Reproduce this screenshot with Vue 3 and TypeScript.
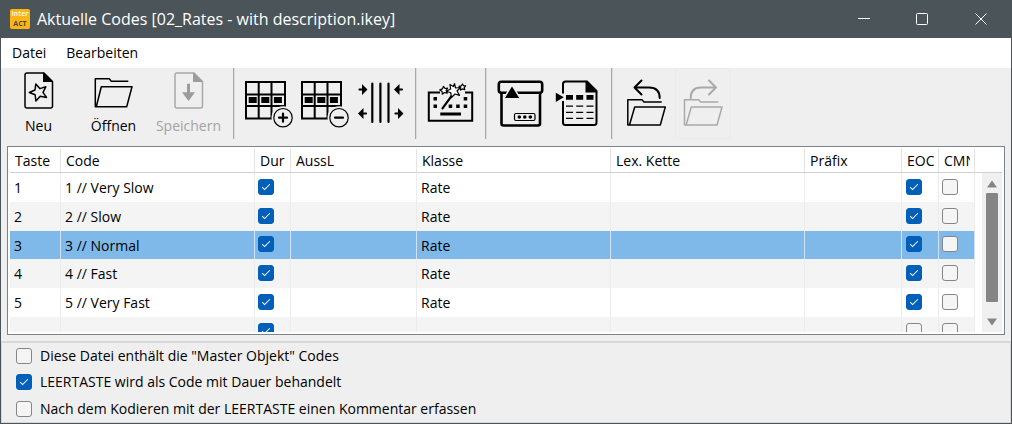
<script setup lang="ts">
import { ref } from 'vue'

interface CodeRow {
  key: string
  code: string
  duration: boolean
  statement: string
  klass: string
  chain: string
  prefix: string
  eoc: boolean
  comment: boolean
}

const makeRow = (key: string, code: string, klass: string, eoc: boolean): CodeRow => ({
  key,
  code,
  duration: true,
  statement: '',
  klass,
  chain: '',
  prefix: '',
  eoc,
  comment: false,
})

const rows = ref<CodeRow[]>([
  makeRow('1', '1 // Very Slow', 'Rate', true),
  makeRow('2', '2 // Slow', 'Rate', true),
  makeRow('3', '3 // Normal', 'Rate', true),
  makeRow('4', '4 // Fast', 'Rate', true),
  makeRow('5', '5 // Very Fast', 'Rate', true),
  makeRow('', '', '', false),
])

const selected = ref(2)

const columns = [
  { id: 'key', label: 'Taste' },
  { id: 'code', label: 'Code' },
  { id: 'dur', label: 'Dur' },
  { id: 'stmt', label: 'AussL' },
  { id: 'klass', label: 'Klasse' },
  { id: 'chain', label: 'Lex. Kette' },
  { id: 'prefix', label: 'Präfix' },
  { id: 'eoc', label: 'EOC' },
  { id: 'cmnt', label: 'CMN' },
]

const options = ref([
  { id: 'master', label: 'Diese Datei enthält die "Master Objekt" Codes', checked: false },
  { id: 'space', label: 'LEERTASTE wird als Code mit Dauer behandelt', checked: true },
  { id: 'note', label: 'Nach dem Kodieren mit der LEERTASTE einen Kommentar erfassen', checked: false },
])
</script>

<template>
  <div class="window">
    <header class="titlebar">
      <div class="logo" aria-hidden="true"><span class="logo-top">inter</span><span class="logo-bottom">ACT</span></div>
      <h1 class="title">Aktuelle Codes [02_Rates - with description.ikey]</h1>
      <button class="caption" type="button" aria-label="Minimieren">
        <svg width="14" height="14" viewBox="0 0 14 14"><path d="M1 6.5h12" /></svg>
      </button>
      <button class="caption" type="button" aria-label="Maximieren">
        <svg width="14" height="14" viewBox="0 0 14 14"><rect x="1.5" y="1.5" width="11" height="11" rx="1" /></svg>
      </button>
      <button class="caption" type="button" aria-label="Schließen">
        <svg width="14" height="14" viewBox="0 0 14 14"><path d="M1.5 1.5l11 11M12.500 1.500l-11 11" /></svg>
      </button>
    </header>

    <nav class="menubar">
      <button type="button">Datei</button>
      <button type="button">Bearbeiten</button>
    </nav>

    <div class="toolbar">
      <div class="group labelled">
        <button type="button" class="file-button">
          <svg width="75" height="44" viewBox="0 0 75 44">
            <path class="line" d="M43 5H26q-2 0-2 2v31q0 2 2 2h23.500q2 0 2-2V13.500z" />
            <path class="solid" d="M42 4.300l10 9.700H42z" />
            <path class="line" d="M28.300 24.500L34 22l.8-6 4 4.600 6-1.800-2.800 5.500 3.500 5.200-6.300-1.200-4.300 4.700-.8-6.200z" />
          </svg>
          <span>Neu</span>
        </button>
        <button type="button" class="file-button">
          <svg width="75" height="44" viewBox="0 0 75 44">
            <path class="line" d="M52.300 13.200H35.300l-2-2.500H19.300v28h31.400l5.300-20H25.300l-5 20" />
          </svg>
          <span>Öffnen</span>
        </button>
        <button type="button" class="file-button" disabled>
          <svg width="75" height="44" viewBox="0 0 75 44">
            <path class="line" d="M43 5H26q-2 0-2 2v31q0 2 2 2h23.500q2 0 2-2V13.500z" />
            <path class="solid" d="M42 4.300l10 9.700H42z" />
            <path class="solid" d="M36 15.700h3v8.600h5l-6.500 8.700L31 24.300h5z" />
          </svg>
          <span>Speichern</span>
        </button>
      </div>

      <div class="divider"></div>

      <div class="group">
        <button type="button" class="tool" aria-label="Zeile hinzufügen">
          <svg width="56" height="70" viewBox="0 0 56 70">
            <path class="grid-lines" d="M5 14h39v36.500H5zM5 26.500h39M5 38h39M17.700 14v36.500M30.500 14v36.500" />
            <path class="solid" d="M7.700 29h8v6h-8zM20.300 29h8v6h-8zM32.900 29h8v6h-8z" />
            <circle class="halo" cx="42" cy="49.700" r="11.500" />
            <circle class="ring" cx="42" cy="49.700" r="9.200" />
            <path class="bold" d="M38 49.700h8M42 45.700v8" />
          </svg>
        </button>
        <button type="button" class="tool" aria-label="Zeile entfernen">
          <svg width="56" height="70" viewBox="0 0 56 70">
            <path class="grid-lines" d="M5 14h39v36.500H5zM5 26.500h39M5 38h39M17.700 14v36.500M30.500 14v36.500" />
            <path class="solid" d="M7.700 29h8v6h-8zM20.300 29h8v6h-8zM32.900 29h8v6h-8z" />
            <circle class="halo" cx="42" cy="49.700" r="11.500" />
            <circle class="ring" cx="42" cy="49.700" r="9.200" />
            <path class="bold" d="M38 49.700h8" />
          </svg>
        </button>
        <button type="button" class="tool" aria-label="Spaltenbreite anpassen">
          <svg width="56" height="70" viewBox="0 0 56 70">
            <path class="bars" d="M19.300 15.500v38.500M27.400 15.500v38.500M35.500 15.500v38.500" />
            <path class="bold" d="M6.500 21.500h5M49 21.500h-5M13 45.500H9M42.500 45.500h4" />
            <path class="solid" d="M9 16l5.500 5.500L9 27zM46.500 16L41 21.500l5.500 5.500zM10.500 40L5 45.500l5.500 5.500zM45 40l5.500 5.500L45 51z" />
          </svg>
        </button>
      </div>

      <div class="divider"></div>

      <div class="group">
        <button type="button" class="tool" aria-label="Tasten automatisch zuweisen">
          <svg width="56" height="70" viewBox="0 0 56 70">
            <path class="grid-lines" d="M17 24.500H5.800V52.700h43.400V24.500H42" />
            <path class="solid" d="M10.500 29H14v3.500h-3.500zM40.700 29h3.500v3.500h-3.500zM10.500 36.500H14V40h-3.500zM25.700 36.500h3.500V40h-3.500zM33.200 36.500h3.500V40h-3.500zM40.700 36.500h3.500V40h-3.500zM17.300 44.500H38v3H17.300z" />
            <path class="wand" d="M19.500 40.300l9.500-13" />
            <path class="star" d="M31.500 15.500l1 4.500 5-.5-3.500 3.500 2.500 4.300-4.500-1.300-3.500 3.500-.7-4.700-4.600-1.600 4.500-2.200-.8-4.500 3.600 2z" />
            <path class="star" d="M20.500 18.300l1.500 2.200 2.600-.4-1.500 2.400 1.200 2.600-2.800-.6-2.200 1.700-.2-2.800-2.300-1.500 2.600-1z" />
            <path class="star" d="M39.500 16l1 1.700 2.200.2-1.500 1.600.5 2.200-2.200-.8-1.900 1.200.1-2.300-1.700-1.400 2.300-.6z" />
          </svg>
        </button>
      </div>

      <div class="divider"></div>

      <div class="group">
        <button type="button" class="tool" aria-label="Archiv">
          <svg width="56" height="70" viewBox="0 0 56 70">
            <rect class="heavy" x="8.500" y="22" width="38.500" height="35.500" rx="2" />
            <rect class="heavy lid" x="5.800" y="13.800" width="43.400" height="11" rx="2.500" />
            <path class="halo" d="M19 15.500l9.500 15.500h-19z" />
            <path class="solid" d="M19 18.500l7.200 11.500H12z" />
            <rect class="thin" x="21.500" y="45.500" width="20.500" height="7" rx="1.500" />
            <circle class="solid" cx="26.300" cy="49" r="1.800" />
            <circle class="solid" cx="31.800" cy="49" r="1.800" />
            <circle class="solid" cx="37.300" cy="49" r="1.800" />
          </svg>
        </button>
        <button type="button" class="tool" aria-label="Tabelle als Dokument">
          <svg width="56" height="70" viewBox="0 0 56 70">
            <path class="grid-lines" d="M14 25.500V16q0-2.500 2.500-2.500H38L47.500 23v31.500q0 2.500-2.500 2.500H16.500Q14 57 14 54.500V33" />
            <path class="solid" d="M36.500 12.500L48.500 24.500h-12zM6.800 24.700l8 4.600-8 4.700zM17 27h7v4.800h-7zM27.200 27h7v4.800h-7zM37.500 27h7v4.800h-7z" />
            <path class="thin" d="M17 38.200h7M27.200 38.200h7M37.500 38.200h7M17 44.300h7M27.200 44.300h7M37.500 44.300h7M17 50.300h7M27.200 50.300h7M37.500 50.300h7" />
          </svg>
        </button>
      </div>

      <div class="divider"></div>

      <div class="group">
        <button type="button" class="tool" aria-label="Rückgängig">
          <svg width="56" height="70" viewBox="0 0 56 70">
            <path class="line" d="M42.700 34H25l-2-2.300H8.800V57h32.500l5-18H15.700l-5.200 18" />
            <path class="arrow" d="M40.700 30Q40.700 19.500 30 19.500H15.500M22.500 12.500l-7 7 7 7" />
          </svg>
        </button>
        <button type="button" class="tool framed" disabled aria-label="Wiederherstellen">
          <svg width="56" height="70" viewBox="0 0 56 70">
            <path class="line" d="M43.300 34H25.700l-2-2.300H9.500V57H42l5-18H16.300l-5.200 18" />
            <path class="arrow" d="M15.700 30Q15.700 19.500 26 19.500h15M34 12.500l7 7-7 7" />
          </svg>
        </button>
      </div>
    </div>

    <main class="table-frame">
      <div class="table-area">
        <table>
          <colgroup>
            <col v-for="c in columns" :key="c.id" :class="'col-' + c.id" />
          </colgroup>
          <thead>
            <tr>
              <th v-for="c in columns" :key="c.id" scope="col"><span>{{ c.label }}</span></th>
            </tr>
          </thead>
          <tbody>
            <tr v-for="(row, i) in rows" :key="i" :class="{ selected: i === selected }" @click="selected = i">
              <td>{{ row.key }}</td>
              <td>{{ row.code }}</td>
              <td class="tick"><input v-model="row.duration" type="checkbox" aria-label="Dur" /></td>
              <td>{{ row.statement }}</td>
              <td>{{ row.klass }}</td>
              <td>{{ row.chain }}</td>
              <td>{{ row.prefix }}</td>
              <td class="tick tick-eoc"><input v-model="row.eoc" type="checkbox" aria-label="EOC" /></td>
              <td class="tick"><input v-model="row.comment" type="checkbox" aria-label="CMN" /></td>
            </tr>
          </tbody>
        </table>
      </div>
      <div class="side">
        <div class="side-head"></div>
        <div class="scrollbar" aria-hidden="true">
          <svg width="12" height="8" viewBox="0 0 12 8"><path d="M6 .5L11 7.500H1z" /></svg>
          <div class="thumb"></div>
          <svg width="12" height="8" viewBox="0 0 12 8"><path d="M6 7.500L11 .5H1z" /></svg>
        </div>
      </div>
    </main>

    <section class="options">
      <div v-for="o in options" :key="o.id" class="option">
        <input :id="'opt-' + o.id" v-model="o.checked" type="checkbox" />
        <label :for="'opt-' + o.id">{{ o.label }}</label>
      </div>
    </section>
  </div>
</template>

<style>
body {
  margin: 0;
}
</style>

<style scoped>
.window {
  box-sizing: border-box;
  display: flex;
  flex-direction: column;
  height: 100vh;
  border: 1px solid #4b5459;
  border-top: 0;
  background: #efefef;
  color: #000;
  font-family: "Open Sans", "Noto Sans", sans-serif;
  font-size: 14px;
  line-height: 20px;
  overflow: hidden;
}

button {
  padding: 0;
  border: 0;
  background: none;
  color: inherit;
  font: inherit;
}

.titlebar {
  display: flex;
  align-items: center;
  flex: none;
  height: 38px;
  padding-left: 9px;
  background: #4b5459;
  color: #fff;
}

.logo {
  display: flex;
  flex-direction: column;
  justify-content: center;
  width: 20px;
  height: 20px;
  border-radius: 2px;
  background: #fdb515;
  font-size: 7px;
  font-weight: 700;
  line-height: 10px;
  text-align: center;
}

.logo-top {
  color: #fff3d6;
}

.logo-bottom {
  color: #4b4a35;
}

.title {
  flex: 1;
  margin: 0 0 0 7px;
  font-size: 16px;
  font-weight: 400;
  white-space: nowrap;
}

.caption {
  display: flex;
  align-items: center;
  justify-content: center;
  width: 58px;
  height: 38px;
}

.caption:last-child {
  width: 60px;
}

.caption svg {
  fill: none;
  stroke: #fff;
  stroke-width: 1;
}

.menubar {
  display: flex;
  flex: none;
  gap: 20px;
  height: 30px;
  padding-left: 11px;
  background: #fff;
}

.toolbar {
  display: flex;
  flex: none;
  height: 71px;
}

.group {
  display: flex;
}

.labelled {
  padding-right: 1px;
}

.divider {
  box-sizing: border-box;
  width: 2px;
  margin: 0 6px;
  border-left: 1px solid #a8a8a8;
  background: #dcdcdc;
}

.file-button {
  display: flex;
  flex-direction: column;
  align-items: center;
  gap: 4px;
  width: 75px;
}

.tool {
  display: flex;
  width: 56px;
}

.framed {
  border-radius: 4px;
  box-shadow: inset 0 0 0 1px #ebebeb;
}

.toolbar svg {
  display: block;
  fill: none;
  stroke: #000;
  stroke-width: 1.5;
  stroke-linejoin: round;
}

.file-button:disabled {
  color: #a3a3a3;
}

.toolbar button:disabled svg {
  stroke: #a9a9a9;
}

.toolbar svg .solid {
  fill: #000;
  stroke: none;
}

.toolbar button:disabled .solid {
  fill: #9c9c9c;
}

.toolbar .grid-lines {
  stroke-width: 2;
  stroke-linejoin: miter;
}

.toolbar .halo {
  fill: #efefef;
  stroke: none;
}

.toolbar .ring {
  stroke-width: 1.2;
}

.toolbar .bold,
.toolbar .bars,
.toolbar .wand {
  stroke-width: 2.2;
  stroke-linecap: round;
}

.toolbar .star {
  fill: #fff;
  stroke-width: 1.2;
}

.toolbar .heavy {
  stroke-width: 2.6;
}

.toolbar .lid {
  fill: #efefef;
}

.toolbar .thin {
  stroke-width: 1.2;
}

.toolbar .arrow {
  stroke-width: 2;
  stroke-linecap: round;
}

.table-frame {
  display: flex;
  flex: 1;
  min-height: 0;
  margin: 7px 6px 6px;
  padding: 2px;
  border: 1px solid #7b838f;
  background: #fff;
}

.table-area {
  flex: 1;
  min-width: 0;
  overflow: hidden;
}

table {
  width: 100%;
  table-layout: fixed;
  border-collapse: separate;
  border-spacing: 0;
}

.col-key {
  width: 51px;
}

.col-code,
.col-klass {
  width: 194px;
}

.col-dur,
.col-cmnt {
  width: 36px;
}

.col-stmt {
  width: 126px;
}

.col-prefix {
  width: 97px;
}

.col-eoc {
  width: 37px;
}

th {
  box-sizing: border-box;
  height: 24px;
  padding: 1px 4px 0 5px;
  border-right: 1px solid #e3e3e3;
  border-bottom: 1px solid #cfcfcf;
  font-weight: 400;
  text-align: left;
}

th span {
  display: block;
  overflow: hidden;
  white-space: nowrap;
}

td {
  box-sizing: border-box;
  height: 29px;
  padding: 1px 4px 0;
  border-right: 1px solid #ececec;
  white-space: nowrap;
}

tbody tr:nth-child(even) td {
  background: #f4f4f4;
}

tbody tr.selected td {
  height: 28px;
  border-right-color: #cfe3f5;
  background: #7fb9ea;
}

td.tick {
  padding: 0 3px 2px;
}

td.tick-eoc {
  padding-left: 4px;
}

input[type='checkbox'] {
  display: flex;
  align-items: center;
  justify-content: center;
  box-sizing: border-box;
  flex: none;
  width: 16px;
  height: 16px;
  margin: 0;
  appearance: none;
  border: 1px solid #868686;
  border-radius: 3px;
  background: #f5f5f5;
}

input[type='checkbox']:checked {
  border-color: #005fb8;
  background: #005fb8;
}

input[type='checkbox']:checked::before {
  width: 7px;
  height: 3px;
  margin-bottom: 2px;
  border-bottom: 1px solid #fff;
  border-left: 1px solid #fff;
  content: '';
  transform: rotate(-45deg);
}

.side {
  display: flex;
  flex-direction: column;
  flex: none;
  width: 27px;
}

.side-head {
  box-sizing: border-box;
  height: 24px;
  border-bottom: 1px solid #cfcfcf;
}

.scrollbar {
  display: flex;
  flex: 1;
  flex-direction: column;
  align-items: center;
  box-sizing: border-box;
  width: 20px;
  margin-left: 7px;
  padding: 7px 0 6px;
  background: #f0f0f0;
}

.scrollbar svg {
  fill: #858585;
}

.thumb {
  flex: 1;
  width: 12px;
  margin: 5px 0 16px;
  border-radius: 1px;
  background: #858585;
}

.options {
  flex: none;
  padding: 0 14px;
  border: 1px solid #d8d8d8;
  border-top-width: 2px;
}

.option {
  display: flex;
  align-items: center;
  gap: 8px;
  height: 26px;
}

.option:last-child {
  margin-top: 1px;
}
</style>
